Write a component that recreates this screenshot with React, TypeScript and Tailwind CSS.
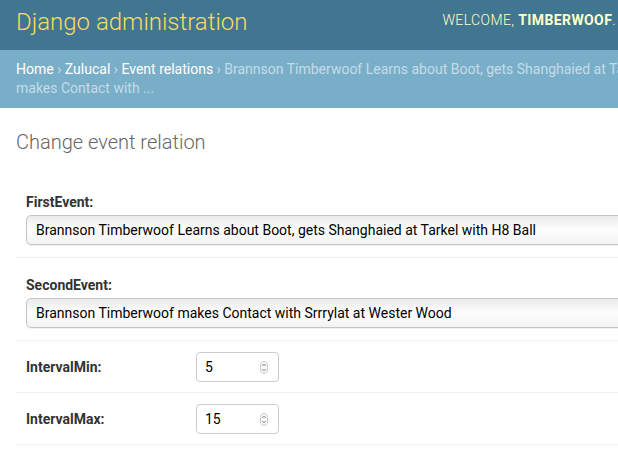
import React from "react";

const Spinner = () => (
  <svg width="8" height="13" viewBox="0 0 8 13" className="shrink-0">
    <rect x="0.5" y="0.5" width="7" height="12" rx="3.5" fill="#fafafa" stroke="#c9c9c9" />
    <path d="M2.3 5 L4 3.2 L5.7 5" fill="none" stroke="#666" strokeWidth="0.9" />
    <path d="M2.3 8 L4 9.8 L5.7 8" fill="none" stroke="#666" strokeWidth="0.9" />
  </svg>
);

const SelectRow = ({ label, value }: { label: string; value: string }) => (
  <div className="border-b border-[#eee] pl-[10px] pt-[10px] pb-[12px]">
    <label className="block pt-[9px] pb-[5px] leading-4 text-[14px] font-bold text-[#333]">{label}</label>
    <div className="w-[700px] h-[30px] flex items-center pl-[9px] rounded-[5px] border border-[#c4c4c4] bg-gradient-to-b from-[#ebebeb] via-[#fdfdfd] to-[#f3f3f3] shadow-[0_1px_1px_rgba(0,0,0,0.06)] text-[14px] text-black whitespace-nowrap">
      {value}
    </div>
  </div>
);

const NumberRow = ({ label, value }: { label: string; value: string }) => (
  <div className="border-b border-[#eee] pl-[10px] pt-[11px] pb-[10px] flex items-center">
    <label className="w-[170px] shrink-0 text-[14px] font-bold text-[#333]">{label}</label>
    <div className="w-[83px] h-[30px] flex items-center justify-between pl-[8px] pr-[10px] rounded-[4px] border border-[#cccccc] bg-white text-[14px] text-black">
      <span>{value}</span>
      <Spinner />
    </div>
  </div>
);

export default function App() {
  return (
    <div className="w-[618px] min-h-screen overflow-hidden bg-white font-['Roboto','Liberation_Sans',sans-serif]">
      <div className="h-[50px] bg-[#417690] flex items-start justify-between pl-4 pr-[2px] whitespace-nowrap">
        <div className="pt-[7px] text-[24px] leading-[30px] font-light text-[#f5dd5d]">Django administration</div>
        <div className="pt-[12px] text-[14px] leading-4 font-light tracking-[0.4px] text-[#ffffcc] uppercase">
          Welcome, <strong className="font-bold">Timberwoof</strong>.
        </div>
      </div>
      <div className="h-[58px] bg-[#79aec8] px-4 py-[10px] text-[14px] leading-[19px] text-[#c4dce8] whitespace-nowrap overflow-hidden">
        <span className="text-white">Home</span> › <span className="text-white">Zulucal</span> ›{" "}
        <span className="text-white">Event relations</span> › Brannson Timberwoof Learns about Boot, gets Shanghaied at Tarkel with H8 Ball → Brannson Timberwoof
        <br />
        makes Contact with ...
      </div>
      <div className="pl-4 pt-[22px]">
        <h1 className="text-[20px] leading-6 font-light text-[#666] mb-[21px]">Change event relation</h1>
        <div>
          <SelectRow label="FirstEvent:" value="Brannson Timberwoof Learns about Boot, gets Shanghaied at Tarkel with H8 Ball" />
          <SelectRow label="SecondEvent:" value="Brannson Timberwoof makes Contact with Srrrylat at Wester Wood" />
          <NumberRow label="IntervalMin:" value="5" />
          <NumberRow label="IntervalMax:" value="15" />
        </div>
      </div>
    </div>
  );
}
